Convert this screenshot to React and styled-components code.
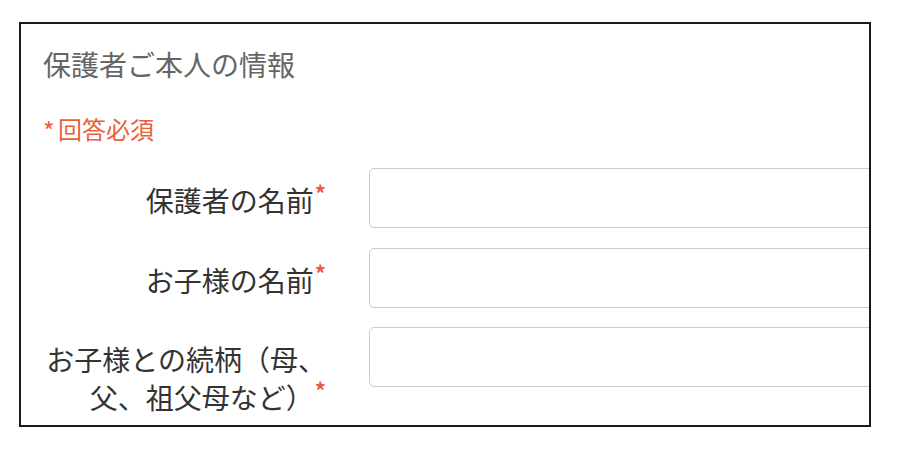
import React from "react";
import styled, { createGlobalStyle } from "styled-components";

const GlobalStyle = createGlobalStyle`
  html, body {
    margin: 0;
    padding: 0;
    background: #fff;
  }
  body {
    font-family: "Noto Sans CJK JP", "Noto Sans", sans-serif;
  }
`;

const fields = [
  { id: "guardian", label: "保護者の名前" },
  { id: "child", label: "お子様の名前" },
  { id: "relation", label: "お子様との続柄（母、父、祖父母など）" },
];

const App = () => {
  return (
    <>
      <GlobalStyle />
      <Frame>
        <Title>保護者ご本人の情報</Title>
        <Required>
          <Mark>*</Mark>回答必須
        </Required>
        <Fields>
          {fields.map((f) => (
            <Row key={f.id}>
              <Label htmlFor={f.id}>
                {f.label}
                <Star>*</Star>
              </Label>
              <Input id={f.id} type="text" />
            </Row>
          ))}
        </Fields>
      </Frame>
    </>
  );
};

// Styled Components
const Frame = styled.section`
  box-sizing: border-box;
  width: 852px;
  height: 405px;
  margin: 22px 0 0 19px;
  padding: 20px 0 0 22px;
  border: 2px solid #1a1a1a;
  overflow: hidden;
  display: flex;
  flex-direction: column;
`;

const Title = styled.h2`
  margin: 0;
  font-size: 28px;
  font-weight: 400;
  line-height: 40px;
  color: #666;
`;

const Required = styled.p`
  margin: 27px 0 0;
  font-size: 24px;
  line-height: 36px;
  color: #e8603c;
`;

const Mark = styled.span`
  display: inline-block;
  width: 15px;
  font-size: 25px;
  line-height: 1;
  position: relative;
  top: 2px;
`;

const Fields = styled.div`
  margin-top: 21px;
  display: flex;
  flex-direction: column;
  gap: 19.5px;
`;

const Row = styled.div`
  display: grid;
  grid-template-columns: 283px 600px;
  column-gap: 43px;
  align-items: start;
`;

const Label = styled.label`
  padding-top: 13px;
  font-size: 28px;
  line-height: 38px;
  color: #333;
  text-align: right;
`;

const Star = styled.span`
  display: inline-block;
  color: #e8603c;
  font-size: 22px;
  font-weight: 700;
  line-height: 22px;
  vertical-align: top;
  margin-left: 1px;
`;

const Input = styled.input`
  box-sizing: border-box;
  height: 60px;
  width: 100%;
  border: 1px solid #ccc;
  border-radius: 5px;
  background: #fff;
  padding: 0 12px;
  font-size: 20px;
  outline: none;
`;

export default App;
